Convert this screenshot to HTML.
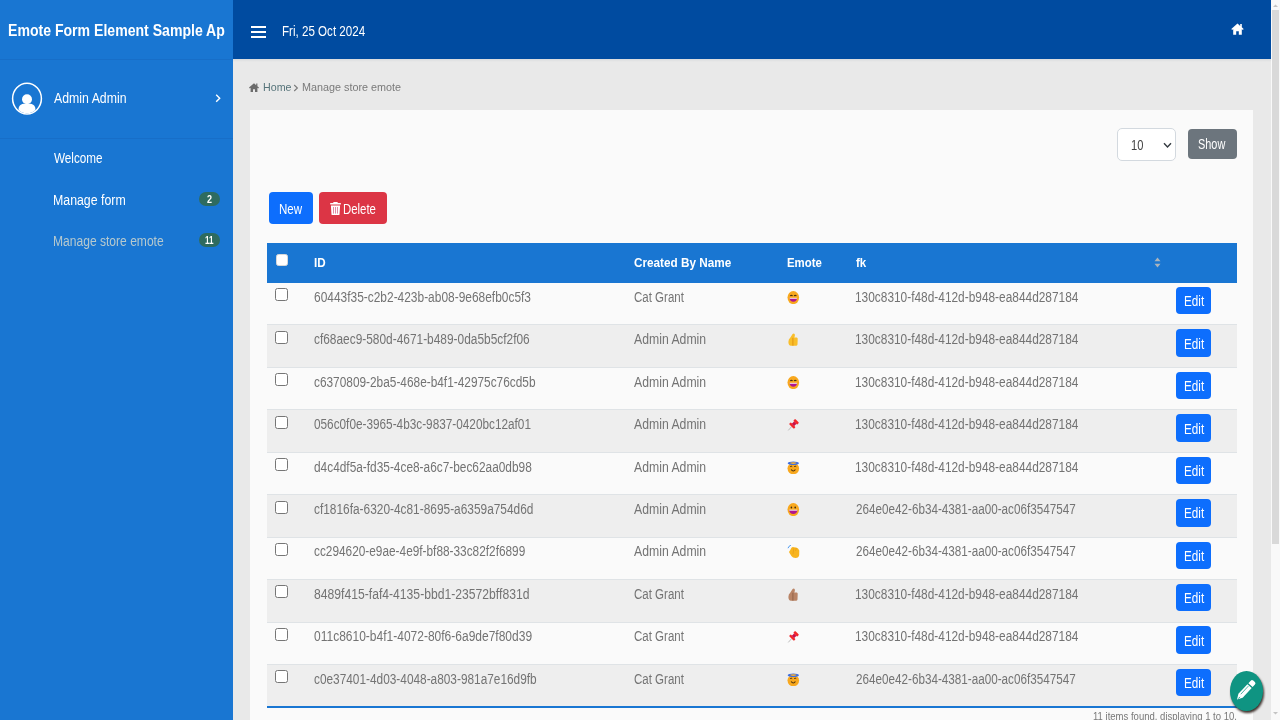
<!DOCTYPE html>
<html><head><meta charset="utf-8">
<style>
*{box-sizing:border-box;margin:0;padding:0}
html,body{width:1280px;height:720px;overflow:hidden;font-family:"Liberation Sans",sans-serif;}
body{background:#e9e9e9;position:relative}
.a{position:absolute}
.t{position:absolute;white-space:pre;line-height:1;transform-origin:0 0}
.cb{position:absolute;width:13px;height:13px;border:1px solid #767676;border-radius:2.5px;background:#fff}
.btn{border-radius:4px}
</style></head><body>
<!-- sidebar -->
<div class="a" style="left:0;top:0;width:233px;height:720px;background:#1976d2"></div>
<div class="a" style="left:0;top:59px;width:233px;height:1px;background:#176ec8"></div>
<div class="a" style="left:0;top:138px;width:233px;height:1px;background:#176ec8"></div>
<svg class="a" style="left:11px;top:82px" width="32" height="33" viewBox="0 0 32 33">
  <defs><clipPath id="avc"><ellipse cx="16" cy="16.6" rx="13.6" ry="14.6"/></clipPath></defs>
  <ellipse cx="16" cy="16.6" rx="14.4" ry="15.3" fill="none" stroke="#fff" stroke-width="1.5"/>
  <circle cx="16" cy="17.3" r="5" fill="#fff"/>
  <path d="M7.6 34 L7.6 27 C7.6 23.5 10.5 21.8 13.5 21.8 L18.5 21.8 C21.5 21.8 24.4 23.5 24.4 27 L24.4 34Z" fill="#fff" clip-path="url(#avc)"/>
</svg>
<svg class="a" style="left:214px;top:93px" width="8" height="11" viewBox="0 0 8 11"><path d="M2.2 1.8 L5.7 5.3 L2.2 8.8" fill="none" stroke="#fff" stroke-width="1.4"/></svg>
<div class="a" style="left:199.4px;top:191.6px;width:20.5px;height:14px;border-radius:7px;background:#2e6b5f"></div>
<div class="a" style="left:199.4px;top:232.7px;width:20.5px;height:14.3px;border-radius:7px;background:#2e6b5f"></div>
<!-- navbar -->
<div class="a" style="left:233px;top:0;width:1038px;height:58.6px;background:#004ba0"></div>
<div class="a" style="left:251.25px;top:26.2px;width:15px;height:1.8px;background:#fff"></div>
<div class="a" style="left:251.25px;top:31.3px;width:15px;height:1.5px;background:#fff"></div>
<div class="a" style="left:251.25px;top:36px;width:15px;height:1.5px;background:#fff"></div>
<svg class="a" style="left:1230.5px;top:23px" width="13" height="12" viewBox="0 0 13 12"><path d="M6.5 0.6 L0.3 6 L1.2 7 L2.2 6.1 L2.2 11.8 L5.2 11.8 L5.2 8.3 L7.8 8.3 L7.8 11.8 L10.8 11.8 L10.8 6.1 L11.8 7 L12.7 6 L10.8 4.3 L10.8 1 L9.2 1 L9.2 2.9Z" fill="#fff"/></svg>
<div class="a" style="left:233px;top:59px;width:1038px;height:3px;background:linear-gradient(#d9dbdd,#e9e9e9)"></div>
<!-- scrollbar -->
<div class="a" style="left:1271px;top:0;width:9px;height:720px;background:#f9f9f9"></div>
<div class="a" style="left:1272px;top:10px;width:7px;height:534px;background:#d9d9d9"></div>
<svg class="a" style="left:1272px;top:3px" width="7" height="5" viewBox="0 0 7 5"><path d="M1 4 L3.5 1.5 L6 4Z" fill="#c4c4c4"/></svg>
<svg class="a" style="left:1272px;top:711px" width="7" height="5" viewBox="0 0 7 5"><path d="M1 1 L3.5 3.5 L6 1Z" fill="#c4c4c4"/></svg>
<!-- breadcrumb house -->
<svg class="a" style="left:249px;top:82.5px" width="10" height="9" viewBox="0 0 10 9"><path d="M5 0.3 L0 4.6 L0.8 5.4 L1.6 4.7 L1.6 9 L4 9 L4 6.3 L6 6.3 L6 9 L8.4 9 L8.4 4.7 L9.2 5.4 L10 4.6 L8.4 3.2 L8.4 0.6 L7.2 0.6 L7.2 2.2Z" fill="#6b6b6b"/></svg>
<svg class="a" style="left:293px;top:84px" width="6" height="8" viewBox="0 0 6 8"><path d="M1.2 1 L4.4 4 L1.2 7" fill="none" stroke="#7a7a7a" stroke-width="1.1"/></svg>
<!-- card -->
<div class="a" style="left:250px;top:110px;width:1003px;height:610px;background:#fafafa"></div>
<!-- select -->
<div class="a" style="left:1117px;top:128px;width:59px;height:33px;border:1px solid #d3d9df;border-radius:5px;background:#fff"></div>
<svg class="a" style="left:1163px;top:142px" width="9" height="7" viewBox="0 0 9 7"><path d="M1 1.3 L4.5 5 L8 1.3" fill="none" stroke="#343a40" stroke-width="1.4"/></svg>
<div class="a btn" style="left:1187.75px;top:128.75px;width:49px;height:30.25px;background:#6c757d"></div>
<!-- buttons -->
<div class="a btn" style="left:268.75px;top:192px;width:43.75px;height:32.25px;background:#0d6efd"></div>
<div class="a btn" style="left:319.25px;top:192px;width:67.5px;height:32.25px;background:#dc3545"></div>
<svg class="a" style="left:329.8px;top:201.8px" width="11" height="13.3" viewBox="0 0 11 13.3"><path d="M3.6 0 L7.4 0 L7.9 1 L10.8 1 L10.8 2.6 L0.2 2.6 L0.2 1 L3.1 1Z M0.9 3.4 L10.1 3.4 L9.5 12.5 Q9.4 13.3 8.6 13.3 L2.4 13.3 Q1.6 13.3 1.5 12.5Z" fill="#fff"/><path d="M3.5 5 V11.6 M5.5 5 V11.6 M7.5 5 V11.6" stroke="#e07a9a" stroke-width="0.9"/></svg>
<!-- table header -->
<div class="a" style="left:267px;top:243px;width:970px;height:40px;background:#1976d2"></div>
<div class="cb" style="left:275.5px;top:254.4px;width:12px;height:12px;border-color:#d8d8d8"></div>
<svg class="a" style="left:1153.5px;top:257px" width="7" height="11" viewBox="0 0 7 11"><path d="M3.5 0.5 L6.5 4.3 L0.5 4.3Z M3.5 10.5 L6.5 6.7 L0.5 6.7Z" fill="#aab4bd"/></svg>
<div class="a" style="left:267px;top:324.44px;width:970px;height:1px;background:#dfe3e6"></div>
<div class="cb" style="left:275px;top:288.3px"></div>
<div class="a btn" style="left:1176.25px;top:286.9px;width:34.5px;height:27.5px;background:#0d6efd"></div>
<svg class="a" style="left:787px;top:290.8px" width="13" height="13" viewBox="0 0 13 13"><use href="#e-grin"/></svg>
<div class="a" style="left:267px;top:325.44px;width:970px;height:42.44px;background:#eeeeee"></div>
<div class="a" style="left:267px;top:366.88px;width:970px;height:1px;background:#dfe3e6"></div>
<div class="cb" style="left:275px;top:330.74px"></div>
<div class="a btn" style="left:1176.25px;top:329.34px;width:34.5px;height:27.5px;background:#0d6efd"></div>
<svg class="a" style="left:787px;top:333.24px" width="13" height="13" viewBox="0 0 13 13"><use href="#e-thumb"/></svg>
<div class="a" style="left:267px;top:409.32px;width:970px;height:1px;background:#dfe3e6"></div>
<div class="cb" style="left:275px;top:373.18px"></div>
<div class="a btn" style="left:1176.25px;top:371.78px;width:34.5px;height:27.5px;background:#0d6efd"></div>
<svg class="a" style="left:787px;top:375.68px" width="13" height="13" viewBox="0 0 13 13"><use href="#e-grin"/></svg>
<div class="a" style="left:267px;top:410.32px;width:970px;height:42.44px;background:#eeeeee"></div>
<div class="a" style="left:267px;top:451.76px;width:970px;height:1px;background:#dfe3e6"></div>
<div class="cb" style="left:275px;top:415.62px"></div>
<div class="a btn" style="left:1176.25px;top:414.22px;width:34.5px;height:27.5px;background:#0d6efd"></div>
<svg class="a" style="left:787px;top:418.12px" width="13" height="13" viewBox="0 0 13 13"><use href="#e-pin"/></svg>
<div class="a" style="left:267px;top:494.2px;width:970px;height:1px;background:#dfe3e6"></div>
<div class="cb" style="left:275px;top:458.06px"></div>
<div class="a btn" style="left:1176.25px;top:456.66px;width:34.5px;height:27.5px;background:#0d6efd"></div>
<svg class="a" style="left:787px;top:460.56px" width="13" height="13" viewBox="0 0 13 13"><use href="#e-halo"/></svg>
<div class="a" style="left:267px;top:495.2px;width:970px;height:42.44px;background:#eeeeee"></div>
<div class="a" style="left:267px;top:536.64px;width:970px;height:1px;background:#dfe3e6"></div>
<div class="cb" style="left:275px;top:500.5px"></div>
<div class="a btn" style="left:1176.25px;top:499.1px;width:34.5px;height:27.5px;background:#0d6efd"></div>
<svg class="a" style="left:787px;top:503px" width="13" height="13" viewBox="0 0 13 13"><use href="#e-smile"/></svg>
<div class="a" style="left:267px;top:579.08px;width:970px;height:1px;background:#dfe3e6"></div>
<div class="cb" style="left:275px;top:542.94px"></div>
<div class="a btn" style="left:1176.25px;top:541.54px;width:34.5px;height:27.5px;background:#0d6efd"></div>
<svg class="a" style="left:787px;top:545.44px" width="13" height="13" viewBox="0 0 13 13"><use href="#e-clap"/></svg>
<div class="a" style="left:267px;top:580.08px;width:970px;height:42.44px;background:#eeeeee"></div>
<div class="a" style="left:267px;top:621.52px;width:970px;height:1px;background:#dfe3e6"></div>
<div class="cb" style="left:275px;top:585.38px"></div>
<div class="a btn" style="left:1176.25px;top:583.98px;width:34.5px;height:27.5px;background:#0d6efd"></div>
<svg class="a" style="left:787px;top:587.88px" width="13" height="13" viewBox="0 0 13 13"><use href="#e-thumb2"/></svg>
<div class="a" style="left:267px;top:663.96px;width:970px;height:1px;background:#dfe3e6"></div>
<div class="cb" style="left:275px;top:627.82px"></div>
<div class="a btn" style="left:1176.25px;top:626.42px;width:34.5px;height:27.5px;background:#0d6efd"></div>
<svg class="a" style="left:787px;top:630.32px" width="13" height="13" viewBox="0 0 13 13"><use href="#e-pin"/></svg>
<div class="a" style="left:267px;top:664.96px;width:970px;height:42.44px;background:#eeeeee"></div>
<div class="a" style="left:267px;top:706.4px;width:970px;height:1px;background:#dfe3e6"></div>
<div class="cb" style="left:275px;top:670.26px"></div>
<div class="a btn" style="left:1176.25px;top:668.86px;width:34.5px;height:27.5px;background:#0d6efd"></div>
<svg class="a" style="left:787px;top:672.76px" width="13" height="13" viewBox="0 0 13 13"><use href="#e-halo"/></svg>
<!-- table bottom border -->
<div class="a" style="left:267px;top:706px;width:970px;height:2px;background:#1976d2"></div>
<span class="t" style="left:7.92px;top:21.86px;font-size:17px;color:#fff;font-weight:bold;transform:scaleX(0.8278);">Emote Form Element Sample Ap</span>
<span class="t" style="left:53.75px;top:91.15px;font-size:14px;color:#fff;transform:scaleX(0.8791);">Admin Admin</span>
<span class="t" style="left:53.75px;top:151.15px;font-size:14px;color:#fff;transform:scaleX(0.8361);">Welcome</span>
<span class="t" style="left:52.87px;top:193.15px;font-size:14px;color:#fff;transform:scaleX(0.8816);">Manage form</span>
<span class="t" style="left:52.89px;top:234.4px;font-size:14px;color:#b6c9ce;transform:scaleX(0.8619);">Manage store emote</span>
<span class="t" style="left:207.3px;top:193.69px;font-size:11px;color:#fff;font-weight:bold;transform:scaleX(0.8167);">2</span>
<span class="t" style="left:205.3px;top:234.89px;font-size:11px;color:#fff;font-weight:bold;transform:scaleX(0.7384);">11</span>
<span class="t" style="left:282.17px;top:24.4px;font-size:14px;color:#fff;transform:scaleX(0.8284);">Fri, 25 Oct 2024</span>
<span class="t" style="left:262.8px;top:81.87px;font-size:11.5px;color:#56747a;transform:scaleX(0.9280);">Home</span>
<span class="t" style="left:302.4px;top:81.87px;font-size:11.5px;color:#7a7a7a;transform:scaleX(0.9383);">Manage store emote</span>
<span class="t" style="left:1131.21px;top:137.65px;font-size:14px;color:#444;transform:scaleX(0.7947);">10</span>
<span class="t" style="left:1198.25px;top:137.4px;font-size:14px;color:#fff;transform:scaleX(0.7797);">Show</span>
<span class="t" style="left:278.68px;top:201.85px;font-size:14px;color:#fff;transform:scaleX(0.8245);">New</span>
<span class="t" style="left:343.19px;top:201.75px;font-size:14px;color:#fff;transform:scaleX(0.8140);">Delete</span>
<span class="t" style="left:314.4px;top:256.14px;font-size:13.3px;color:#fff;font-weight:bold;transform:scaleX(0.8763);">ID</span>
<span class="t" style="left:633.8px;top:255.94px;font-size:13.3px;color:#fff;font-weight:bold;transform:scaleX(0.8832);">Created By Name</span>
<span class="t" style="left:786.6px;top:255.94px;font-size:13.3px;color:#fff;font-weight:bold;transform:scaleX(0.8573);">Emote</span>
<span class="t" style="left:856px;top:255.94px;font-size:13.3px;color:#fff;font-weight:bold;transform:scaleX(0.8690);">fk</span>
<span class="t" style="left:313.75px;top:289.85px;font-size:14px;color:#737373;transform:scaleX(0.8524);">60443f35-c2b2-423b-ab08-9e68efb0c5f3</span>
<span class="t" style="left:633.6px;top:289.85px;font-size:14px;color:#737373;transform:scaleX(0.8224);">Cat Grant</span>
<span class="t" style="left:855.15px;top:289.85px;font-size:14px;color:#737373;transform:scaleX(0.8491);">130c8310-f48d-412d-b948-ea844d287184</span>
<span class="t" style="left:1183.57px;top:294.25px;font-size:14px;color:#fff;transform:scaleX(0.8350);">Edit</span>
<span class="t" style="left:313.75px;top:332.29px;font-size:14px;color:#737373;transform:scaleX(0.8499);">cf68aec9-580d-4671-b489-0da5b5cf2f06</span>
<span class="t" style="left:633.6px;top:332.29px;font-size:14px;color:#737373;transform:scaleX(0.8743);">Admin Admin</span>
<span class="t" style="left:855.15px;top:332.29px;font-size:14px;color:#737373;transform:scaleX(0.8491);">130c8310-f48d-412d-b948-ea844d287184</span>
<span class="t" style="left:1183.57px;top:336.69px;font-size:14px;color:#fff;transform:scaleX(0.8350);">Edit</span>
<span class="t" style="left:313.75px;top:374.73px;font-size:14px;color:#737373;transform:scaleX(0.8468);">c6370809-2ba5-468e-b4f1-42975c76cd5b</span>
<span class="t" style="left:633.6px;top:374.73px;font-size:14px;color:#737373;transform:scaleX(0.8743);">Admin Admin</span>
<span class="t" style="left:855.15px;top:374.73px;font-size:14px;color:#737373;transform:scaleX(0.8491);">130c8310-f48d-412d-b948-ea844d287184</span>
<span class="t" style="left:1183.57px;top:379.13px;font-size:14px;color:#fff;transform:scaleX(0.8350);">Edit</span>
<span class="t" style="left:313.75px;top:417.17px;font-size:14px;color:#737373;transform:scaleX(0.8421);">056c0f0e-3965-4b3c-9837-0420bc12af01</span>
<span class="t" style="left:633.6px;top:417.17px;font-size:14px;color:#737373;transform:scaleX(0.8743);">Admin Admin</span>
<span class="t" style="left:855.15px;top:417.17px;font-size:14px;color:#737373;transform:scaleX(0.8491);">130c8310-f48d-412d-b948-ea844d287184</span>
<span class="t" style="left:1183.57px;top:421.57px;font-size:14px;color:#fff;transform:scaleX(0.8350);">Edit</span>
<span class="t" style="left:313.75px;top:459.61px;font-size:14px;color:#737373;transform:scaleX(0.8478);">d4c4df5a-fd35-4ce8-a6c7-bec62aa0db98</span>
<span class="t" style="left:633.6px;top:459.61px;font-size:14px;color:#737373;transform:scaleX(0.8743);">Admin Admin</span>
<span class="t" style="left:855.15px;top:459.61px;font-size:14px;color:#737373;transform:scaleX(0.8491);">130c8310-f48d-412d-b948-ea844d287184</span>
<span class="t" style="left:1183.57px;top:464.01px;font-size:14px;color:#fff;transform:scaleX(0.8350);">Edit</span>
<span class="t" style="left:313.75px;top:502.05px;font-size:14px;color:#737373;transform:scaleX(0.8490);">cf1816fa-6320-4c81-8695-a6359a754d6d</span>
<span class="t" style="left:633.6px;top:502.05px;font-size:14px;color:#737373;transform:scaleX(0.8743);">Admin Admin</span>
<span class="t" style="left:856px;top:502.05px;font-size:14px;color:#737373;transform:scaleX(0.8347);">264e0e42-6b34-4381-aa00-ac06f3547547</span>
<span class="t" style="left:1183.57px;top:506.45px;font-size:14px;color:#fff;transform:scaleX(0.8350);">Edit</span>
<span class="t" style="left:313.75px;top:544.49px;font-size:14px;color:#737373;transform:scaleX(0.8455);">cc294620-e9ae-4e9f-bf88-33c82f2f6899</span>
<span class="t" style="left:633.6px;top:544.49px;font-size:14px;color:#737373;transform:scaleX(0.8743);">Admin Admin</span>
<span class="t" style="left:856px;top:544.49px;font-size:14px;color:#737373;transform:scaleX(0.8347);">264e0e42-6b34-4381-aa00-ac06f3547547</span>
<span class="t" style="left:1183.57px;top:548.89px;font-size:14px;color:#fff;transform:scaleX(0.8350);">Edit</span>
<span class="t" style="left:313.75px;top:586.93px;font-size:14px;color:#737373;transform:scaleX(0.8684);">8489f415-faf4-4135-bbd1-23572bff831d</span>
<span class="t" style="left:633.6px;top:586.93px;font-size:14px;color:#737373;transform:scaleX(0.8224);">Cat Grant</span>
<span class="t" style="left:855.15px;top:586.93px;font-size:14px;color:#737373;transform:scaleX(0.8491);">130c8310-f48d-412d-b948-ea844d287184</span>
<span class="t" style="left:1183.57px;top:591.33px;font-size:14px;color:#fff;transform:scaleX(0.8350);">Edit</span>
<span class="t" style="left:313.75px;top:629.37px;font-size:14px;color:#737373;transform:scaleX(0.8576);">011c8610-b4f1-4072-80f6-6a9de7f80d39</span>
<span class="t" style="left:633.6px;top:629.37px;font-size:14px;color:#737373;transform:scaleX(0.8224);">Cat Grant</span>
<span class="t" style="left:855.15px;top:629.37px;font-size:14px;color:#737373;transform:scaleX(0.8491);">130c8310-f48d-412d-b948-ea844d287184</span>
<span class="t" style="left:1183.57px;top:633.77px;font-size:14px;color:#fff;transform:scaleX(0.8350);">Edit</span>
<span class="t" style="left:313.75px;top:671.81px;font-size:14px;color:#737373;transform:scaleX(0.8463);">c0e37401-4d03-4048-a803-981a7e16d9fb</span>
<span class="t" style="left:633.6px;top:671.81px;font-size:14px;color:#737373;transform:scaleX(0.8224);">Cat Grant</span>
<span class="t" style="left:856px;top:671.81px;font-size:14px;color:#737373;transform:scaleX(0.8347);">264e0e42-6b34-4381-aa00-ac06f3547547</span>
<span class="t" style="left:1183.57px;top:676.21px;font-size:14px;color:#fff;transform:scaleX(0.8350);">Edit</span>
<span class="t" style="left:1092.5px;top:710.48px;font-size:11.6px;color:#787878;transform:scaleX(0.8220);">11 items found, displaying 1 to 10.</span>
<!-- FAB -->
<div class="a" style="left:1230.8px;top:672.6px;width:33.3px;height:40px;border-radius:50%;background:#3d2f2a;filter:blur(0.9px)"></div>
<div class="a" style="left:1229.6px;top:671.25px;width:33.3px;height:40px;border-radius:50%;background:#0f9482"></div>
<svg class="a" style="left:1234px;top:678px" width="24" height="25" viewBox="0 0 24 25"><g transform="translate(3,21.6) rotate(-47)"><path d="M0 0 L5.2 -2.9 L18.4 -2.9 L18.4 2.9 L5.2 2.9Z" fill="#fff"/><path d="M19.8 -2.9 L23.2 -2.9 Q25 -2.9 25 -1.1 L25 1.1 Q25 2.9 23.2 2.9 L19.8 2.9Z" fill="#fff"/><path d="M6.5 -0.9 L17.6 -0.9" stroke="#0f9482" stroke-width="0.7"/><path d="M1.6 0.3 L4 0.3" stroke="#0f9482" stroke-width="0.8"/></g></svg>

<svg width="0" height="0" style="position:absolute">
<defs>
 <g id="e-grin"><ellipse cx="6.3" cy="6.6" rx="5.8" ry="6.5" fill="#f8a81e"/><path d="M3.2 4.8 q1.2 -1 2.4 0 M7 4.8 q1.2 -1 2.4 0" stroke="#4a3010" stroke-width="1.2" fill="none"/><path d="M2.6 7 L10 7 Q9.7 10.8 6.3 10.8 Q2.9 10.8 2.6 7Z" fill="#b0158f"/><rect x="2.7" y="6.8" width="7.2" height="1" fill="#f5e6f0"/></g>
 <g id="e-smile"><ellipse cx="6.3" cy="6.6" rx="5.8" ry="6.5" fill="#f8a81e"/><ellipse cx="4.4" cy="4.5" rx="0.8" ry="1.1" fill="#3a2a10"/><ellipse cx="8.2" cy="4.5" rx="0.8" ry="1.1" fill="#3a2a10"/><path d="M2.2 7 L10.4 7 Q10 11 6.3 11 Q2.6 11 2.2 7Z" fill="#b0158f"/><rect x="2.3" y="6.7" width="8" height="1" fill="#f5e6f0"/></g>
 <g id="e-halo"><ellipse cx="6.3" cy="7.6" rx="5.8" ry="5.7" fill="#f8a81e"/><ellipse cx="6.3" cy="2.2" rx="5.6" ry="1.8" fill="#3f6fe0"/><ellipse cx="6.3" cy="2.1" rx="3.2" ry="0.8" fill="#f8b030"/><path d="M3.2 5.6 q1 -0.8 2 0 M7.2 5.6 q1 -0.8 2 0" stroke="#4a3010" stroke-width="1" fill="none"/><path d="M4.2 8.5 Q6.3 11.5 8.4 8.5" stroke="#4a3010" stroke-width="1.2" fill="none"/></g>
 <g id="e-thumb"><path d="M5.6 0.9 Q6.8 -0.1 7.7 1 L7.9 2.8 L7.3 4.5 L9.8 4.5 Q10.8 4.7 10.7 6 L10.5 11.5 Q10.3 12.8 9 12.8 L4 12.8 Q1.4 12.6 1.4 9 Q1.4 6 3.2 4.8 Z" fill="#f9be2a"/><path d="M5.9 4.8 V12.7" stroke="#e09010" stroke-width="0.9"/></g>
 <g id="e-thumb2"><path d="M5.6 0.9 Q6.8 -0.1 7.7 1 L7.9 2.8 L7.3 4.5 L9.8 4.5 Q10.8 4.7 10.7 6 L10.5 11.5 Q10.3 12.8 9 12.8 L4 12.8 Q1.4 12.6 1.4 9 Q1.4 6 3.2 4.8 Z" fill="#b98466"/><path d="M5.9 4.8 V12.7" stroke="#8e5f45" stroke-width="0.9"/></g>
 <g id="e-pin"><path d="M1.3 12.4 L4.6 8.6" stroke="#b4b4b4" stroke-width="0.9"/><g transform="translate(7.3,5.6) rotate(-45)"><rect x="-4" y="-3.4" width="2.4" height="6.8" rx="0.6" fill="#f2262a"/><rect x="-1.8" y="-1.7" width="3.2" height="3.4" fill="#c8104a"/><rect x="1.3" y="-2.7" width="2.6" height="5.4" rx="0.6" fill="#f2262a"/></g></g>
 <g id="e-clap"><path d="M1 3.2 Q1.8 0.9 3.8 0.3" stroke="#4a98f0" stroke-width="1" fill="none"/><path d="M4 3.5 Q5 1.8 6.8 2.2 L9 2.4 Q10.4 2.6 11 3.6 L12.3 5.5 L12.2 10 Q11.8 12.9 8.6 12.9 Q5.6 12.9 4.4 11 L2.2 7.6 Q1.8 6.2 3 5.4Z" fill="#f8b41e"/><path d="M6.8 3.2 L6 9.2 M9.2 3 L8.6 6" stroke="#e39a12" stroke-width="0.6" fill="none"/></g>
</defs></svg>
</body></html>
